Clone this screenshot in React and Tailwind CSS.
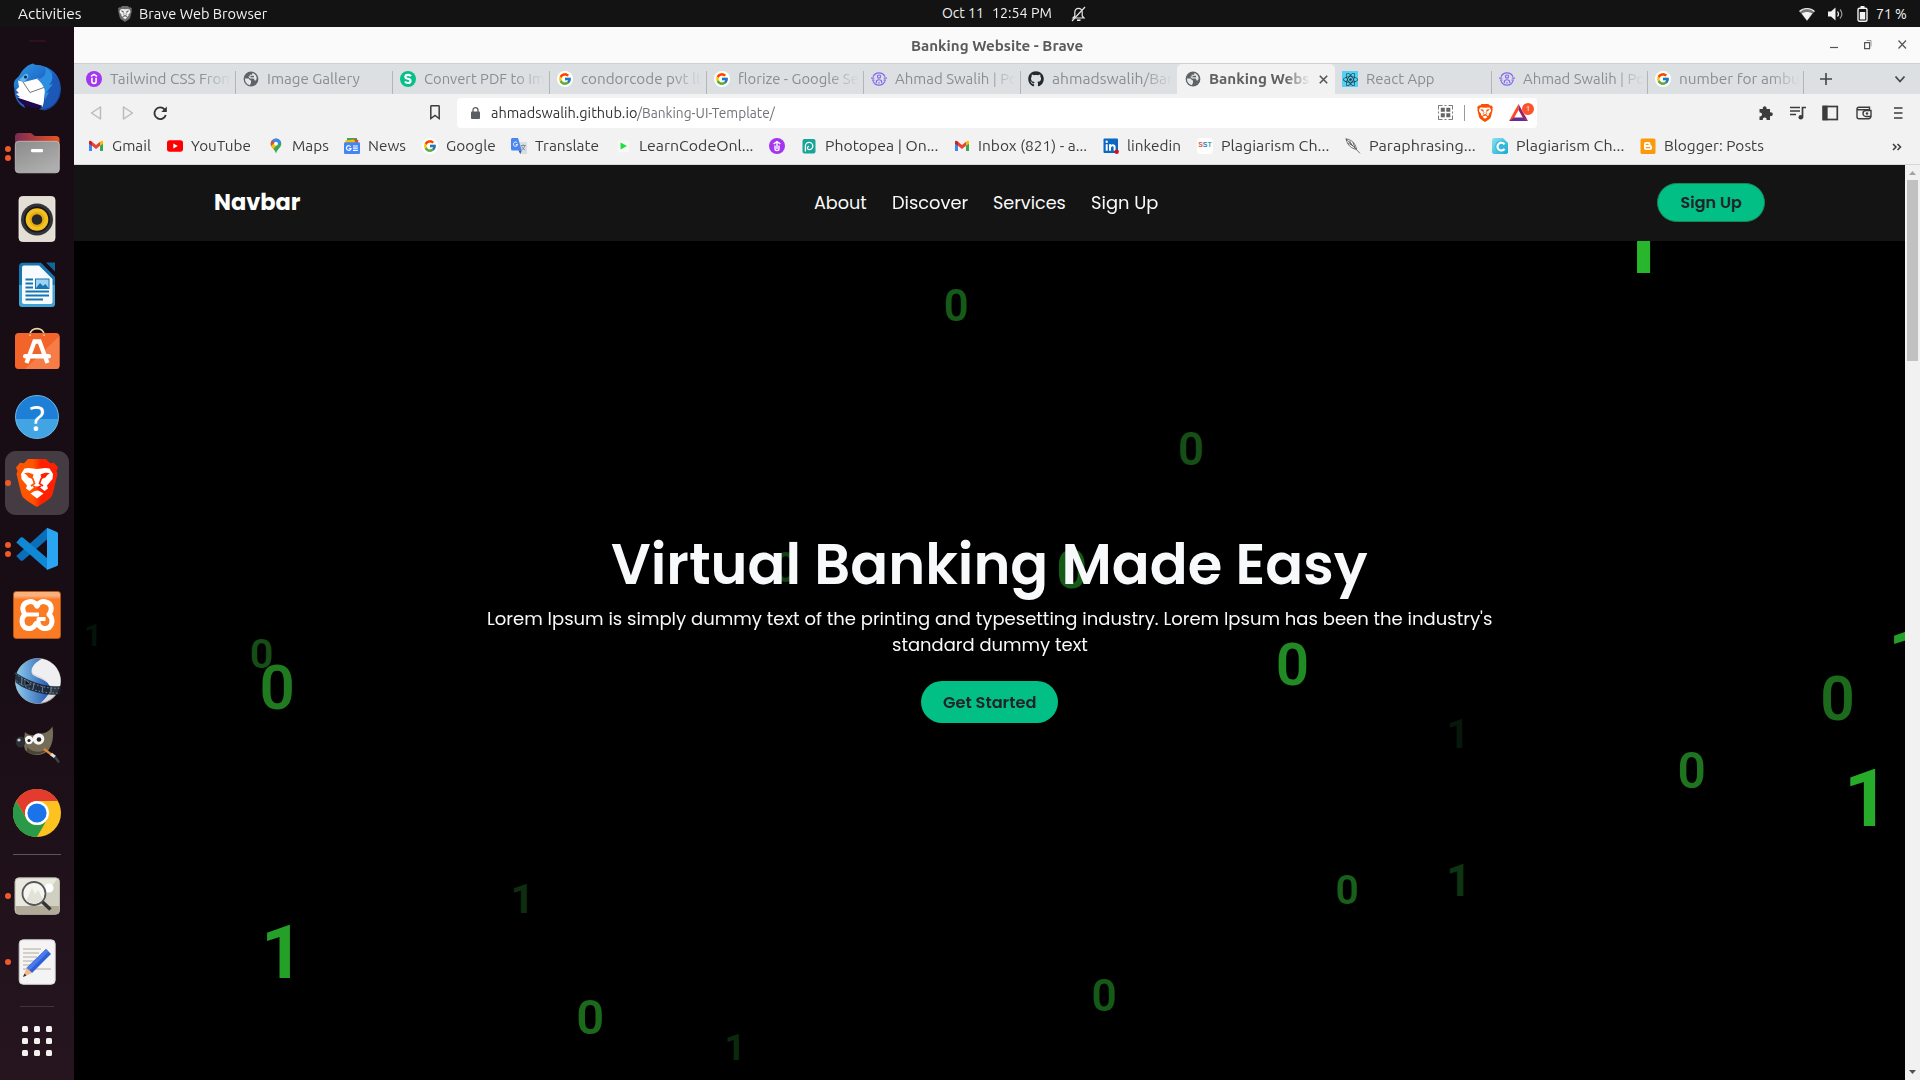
import { useLayoutEffect, useRef, useState } from "react";
import { FcGoogle } from "react-icons/fc";
import { FaGithub, FaReact } from "react-icons/fa";

/* Single line of text stretched to an exact width. */
function Fit({ w, className = "", children }) {
  const ref = useRef(null);
  const [s, setS] = useState(1);
  useLayoutEffect(() => {
    setS(w / ref.current.offsetWidth);
  }, [w]);
  return (
    <span className={"block shrink-0 whitespace-nowrap " + className} style={{ width: w }}>
      <span ref={ref} className="inline-block origin-left" style={{ transform: `scaleX(${s})` }}>
        {children}
      </span>
    </span>
  );
}

/* ---------- small site icons ---------- */
const Google = () => (
  <span className="flex size-4 items-center justify-center rounded-full bg-white">
    <FcGoogle size={14} />
  </span>
);
const Udemy = () => (
  <svg width="16" height="16" viewBox="0 0 16 16">
    <circle cx="8" cy="8" r="8" fill="#a435f0" />
    <path d="M5 5.400 8 3.400l3 2M5.900 6.800v3.600c0 2.600 4.200 2.600 4.200 0V6.800" fill="none" stroke="#fff" strokeWidth="1.600" />
  </svg>
);
const UdemyT = () => (
  <svg width="16" height="16" viewBox="0 0 16 16">
    <circle cx="8" cy="8" r="8" fill="#a435f0" />
    <path d="M4.600 6 8 3.600 11.400 6M6 7.600v3.200c0 2.400 4 2.400 4 0V7.600M8 4v7" fill="none" stroke="#fff" strokeWidth="1.400" />
  </svg>
);
const Globe = () => (
  <svg width="16" height="16" viewBox="0 0 16 16">
    <circle cx="8" cy="8" r="7.400" fill="#5f6368" />
    <path d="M2 7.600h2.500c2.500 0 1.500 1.900 3.500 1.900v2.500l-1.200 2.300C4 13.600 1.800 11 2 7.600z" fill="#e4e7ea" />
    <path d="M9.500 2.100 9 3.800H6.700v1.700H5.200L7 7.600h3c1.500 0 1.500 1.800 1.500 1.800h1.200c1.700-1.200 1.300-5.600-3.200-7.300z" fill="#e4e7ea" />
    <path d="M7.500 4.800h3.500v1.500H7.500z" fill="#5f6368" />
  </svg>
);
const Smallpdf = () => (
  <svg width="16" height="16" viewBox="0 0 16 16">
    <circle cx="8" cy="8" r="8" fill="#06c08a" />
    <path
      d="M10.900 5.300C10.300 4.300 9.300 3.900 8.100 3.900c-3.300 0-3.500 2.900-1.200 3.600l2 .5c2.400.7 2.200 4-.9 4-1.400 0-2.500-.5-3-1.500"
      fill="none"
      stroke="#fff"
      strokeWidth="2.100"
    />
  </svg>
);
const Person = () => (
  <svg width="16" height="16" viewBox="0 0 16 16" fill="none" stroke="#8468f0" strokeWidth="1.200">
    <path d="M2 5.800A6.600 6.600 0 0 1 14 5.800M2 10.200A6.600 6.600 0 0 0 14 10.200" />
    <circle cx="8" cy="5.600" r="1.600" />
    <path d="M5.300 12.300V11c0-3 5.400-3 5.400 0v1.300M0 7.200h3.200M12.800 7.200H16M1 9.200h2.500M12.500 9.200H15M8 11v1.500" />
  </svg>
);
const ReactIcon = () => (
  <span className="flex size-4 items-center justify-center bg-[#53d1f5]">
    <FaReact size={15} color="#20323a" />
  </span>
);
const Gmail = () => (
  <svg width="16" height="16" viewBox="0 0 16 16">
    <path d="M1 3.600v9.400h3V7z" fill="#4285f4" />
    <path d="M15 3.600v9.400h-3V7z" fill="#34a853" />
    <path d="M4 3.800v4L8 11l4-3.200v-4L8 6.900z" fill="#ea4335" />
    <path d="M1 5.700V4.200C1 2.400 2.800 2.400 3.700 3.400L4 3.800v4z" fill="#c5221f" />
    <path d="M15 5.700V4.200c0-1.800-1.800-1.800-2.700-.8l-.3.400v4z" fill="#fbbc04" />
  </svg>
);
const YouTube = () => (
  <svg width="16" height="16" viewBox="0 0 16 16">
    <rect y="2.300" width="16" height="11.400" rx="2.600" fill="#f00" />
    <path d="M6.300 5.400v5.200L10.800 8z" fill="#fff" />
  </svg>
);
const Maps = () => (
  <svg width="16" height="16" viewBox="0 0 16 16">
    <path d="M8 0.500a5.300 5.300 0 0 0-5.300 5.300C2.700 9.500 6.600 10.600 8 15.500c1.400-4.900 5.300-6 5.300-9.700A5.300 5.300 0 0 0 8 .5z" fill="#34a853" />
    <path d="M8 .5a5.300 5.300 0 0 0-4.100 2L6.500 4.700 11 1.400A5.300 5.300 0 0 0 8 .5z" fill="#4285f4" />
    <path d="M3.900 2.500C2.400 4.200 2.400 6.300 3.100 7.900L6.500 4.700z" fill="#ea4335" />
    <path d="M3.100 7.900c.5 1.200 1.300 2 2.200 3l4.700-5L6.500 4.700z" fill="#fbbc04" />
    <path d="M11 1.400a5.200 5.200 0 0 1 2.100 3L9.500 7 8 4z" fill="#4285f4" />
    <circle cx="8" cy="5.700" r="1.900" fill="#fff" />
  </svg>
);
const News = () => (
  <svg width="16" height="16" viewBox="0 0 16 16">
    <path d="M3 0h10v4H3z" fill="#34a853" />
    <path d="M9 1l5.500 1-1 4H8z" fill="#ea4335" />
    <path d="M1 2.500l9-1 2 4H2z" fill="#fbbc04" />
    <rect y="4.300" width="16" height="11.700" rx="1.200" fill="#4285f4" />
    <path d="M6.700 8.800A2.300 2.300 0 1 0 7 10.500H5M9 8h4.800M9 10.200h4.800M9 12.400h4.800" fill="none" stroke="#fff" strokeWidth="1.200" />
  </svg>
);
const Translate = () => (
  <svg width="16" height="16" viewBox="0 0 16 16">
    <path d="M6 4h10v12H9z" fill="#d9dce0" />
    <path d="M0 1.500C0 .7.700 0 1.500 0H7l3.800 12.500H1.500A1.500 1.500 0 0 1 0 11z" fill="#4a86f0" />
    <path d="M7.500 12.500h3.300L9.300 16z" fill="#2b59b5" />
    <path d="M6.300 5A2.100 2.100 0 1 0 6.600 6.600H4.800" fill="none" stroke="#fff" strokeWidth="1" />
    <path d="M9.800 7.500h5M12.200 6.500v1M13.700 7.500c-.3 2-1.500 3.500-3 4.500M10.800 8.500c.5 1.500 1.800 2.800 3.200 3.500" fill="none" stroke="#7b8794" strokeWidth=".9" />
  </svg>
);
const Learn = () => (
  <svg width="16" height="16" viewBox="0 0 16 16">
    <rect x="3" y="2.500" width="11" height="12" rx="2" fill="#f8f8f8" />
    <path d="M5.500 4.500v7L12 8z" fill="#1fe03c" />
  </svg>
);
const Photopea = () => (
  <svg width="16" height="16" viewBox="0 0 16 16">
    <rect x="1.500" y="1" width="13" height="14.500" rx="2" fill="#18a497" />
    <path d="M4.400 13.500V8a3.700 3.700 0 1 1 3.700 3.700c-2.300 0-2-3.400-.1-3.400" fill="none" stroke="#fff" strokeWidth="1.300" />
  </svg>
);
const LinkedIn = () => (
  <svg width="16" height="16" viewBox="0 0 16 16">
    <rect x=".5" y=".5" width="14.500" height="14.500" rx="1" fill="#0a66c2" />
    <path d="M3.700 6.300v6.400M7 12.700V6.300M7.300 9c.5-2.300 4.300-2.600 4.300.500v3.200" fill="none" stroke="#fff" strokeWidth="2" />
    <circle cx="3.700" cy="3.800" r="1.200" fill="#fff" />
    <circle cx="13.700" cy="13.700" r="2.200" fill="#d11124" />
  </svg>
);
const Sst = () => (
  <span className="flex size-4 items-center justify-center rounded bg-white font-['Liberation_Sans'] text-[7px] font-bold">
    <span className="text-[#e0554f]">S</span>
    <span className="text-[#2d7fc2]">S</span>
    <span className="text-[#4aa78f]">T</span>
  </span>
);
const Feather = () => (
  <svg width="16" height="16" viewBox="0 0 16 16" fill="none" stroke="#444" strokeWidth=".75">
    <path d="M1 .8c4 .7 7 2.500 8.700 5.500 1 1.800 1.600 3.600 1.900 5C8 11 4.700 8.800 3 6 2 4.300 1.300 2.500 1 .8z" fill="#fff" />
    <path d="m1 .8 14 14.500M4.500 2.800 7 7M8 4.500l2 5.500M3 5l5 3" />
  </svg>
);
const CIcon = () => (
  <svg width="16" height="16" viewBox="0 0 16 16">
    <defs>
      <linearGradient id="cg" x1="0" x2="1" y2="1">
        <stop offset="0" stopColor="#8fe3f0" />
        <stop offset="1" stopColor="#12a9cf" />
      </linearGradient>
    </defs>
    <path d="M1.500 0H11l5 5v9.500L14.500 16h-13L0 14.500v-13z" fill="url(#cg)" />
    <circle cx="9.200" cy="8.500" r="6" fill="#35b9d8" />
    <path d="M12.500 6.300a3.900 3.900 0 1 0 0 4.600" fill="none" stroke="#fff" strokeWidth="2.200" />
  </svg>
);
const Blogger = () => (
  <svg width="16" height="16" viewBox="0 0 16 16">
    <rect x=".5" y=".5" width="15" height="15.500" rx="1.500" fill="#fb9b0b" />
    <path d="M4 6a2 2 0 0 1 2-2h2.500a2 2 0 0 1 2 2v1c0 .5 1.500.4 1.500 1.200V10a2 2 0 0 1-2 2H6a2 2 0 0 1-2-2z" fill="#fff" />
    <path d="M6.200 6.300h2M6.200 9.700h3.600" stroke="#fb9b0b" strokeWidth="1.200" strokeLinecap="round" />
  </svg>
);

/* ---------- Brave lion, shared by dock, top bar and address bar ---------- */
function Lion({ w, h, fill, face = "#fff" }) {
  return (
    <svg width={w} height={h} viewBox="0 0 42 48" className="shrink-0">
      <defs>
        <linearGradient id="br" x1="0" x2="1">
          <stop offset=".4" stopColor="#ff5500" />
          <stop offset=".6" stopColor="#ff2000" />
        </linearGradient>
      </defs>
      <path
        d="M12 0h18l4 4.300 4-.5L42 8.500l-1.500 3.500 1 3-5 20.500C35 40 29 43 21 48 13 43 7 40 5.500 35.500L.5 15l1-3L0 8.500l4-4.700 4 .5z"
        fill={fill}
      />
      <path
        d="M12.500 9 21 10l8.500-1 4 .5L37 15l-.5 5-5.500 6.500 1 3-3.500 2.500-5-4-2.500-.500-2.500.5-5 4L10 29.500l1-3L5.500 20 5 15l3.500-5.500z"
        fill={face}
      />
      <path d="M8 14.300c3-1.200 6-.6 9.500 1.200L16.500 20l-4-1.500c-1-1.800-2.500-3.200-4.500-4.200zM34 14.300c-3-1.200-6-.6-9.500 1.200l1 4.500 4-1.500c1-1.800 2.500-3.200 4.500-4.200z" fill={fill} />
      <path d="M16.500 19 18.500 24.500 15 27M25.500 19 23.500 24.500 27 27M17 27l4 2 4-2" fill="none" stroke={fill} strokeWidth="1.700" />
      <path d="M14.500 34.500c2-1.500 4.500-3 6.500-3s4.500 1.500 6.500 3L21 39.500z" fill={face} />
    </svg>
  );
}

/* ---------- dock icons ---------- */
const Ic = ({ children }) => (
  <svg width="48" height="48" viewBox="0 0 48 48">
    {children}
  </svg>
);
const Thunderbird = () => (
  <Ic>
    <defs>
      <linearGradient id="tb" x1="0" y1="0" x2=".8" y2="1">
        <stop offset="0" stopColor="#2f9be6" />
        <stop offset=".6" stopColor="#1c5fc4" />
        <stop offset="1" stopColor="#15357f" />
      </linearGradient>
    </defs>
    <path d="M6 13C10 6 14 2 20 .5l2 1.200C37 2 48 12 48 26c0 10-6 19-16 21.500l-6-1 3-3L7 35C2 30-1 22 2 17z" fill="url(#tb)" />
    <path d="M2 24c-2 8 2 17 10 21l-3-9z" fill="#2765bd" />
    <path d="M5 17.500 11 19l14-3.500 8 8.500-3 20L4 35l3-1-4-3 3-1-3-3 3-3z" fill="#fff" />
    <path d="m10 19 7 10.500L35 23" fill="none" stroke="#777" strokeWidth="1" />
    <path d="m4 34.500 26 8.500-5 1.500-2 1C14 45 6 40 4 34.500z" fill="#21074b" />
    <path d="M33 23c-3 8 1 15-5 23.500C44 45 47 33 47 24c-1-7-4-12-8-14 2 6-1 10-6 13z" fill="#1b58b8" />
    <path d="M24 16c8 0 10-7 8-12 8 4 10 12 4 18l4-1-7 9 3-1-4 8c1-8 0-15-8-21z" fill="#2c8ee0" />
    <path d="m6 17 6-6c3-1 4 2 3 4l-4 4z" fill="#5fb7ef" />
    <circle cx="12.500" cy="14" r="1.600" fill="#222c33" />
  </Ic>
);
const Files = () => (
  <Ic>
    <defs>
      <linearGradient id="fl" x1="0" x2="1">
        <stop offset="0" stopColor="#7b2a55" />
        <stop offset="1" stopColor="#e95420" />
      </linearGradient>
      <linearGradient id="fg" x1="0" x2=".6" y2="1">
        <stop offset="0" stopColor="#8b8b8b" />
        <stop offset="1" stopColor="#aeaeae" />
      </linearGradient>
    </defs>
    <path d="M2 30V7.500A3.500 3.500 0 0 1 5.500 4h12.300l4 3H43a3.500 3.500 0 0 1 3.500 3.500V30z" fill="url(#fl)" />
    <rect x="2.300" y="12.300" width="44" height="31.500" rx="3.500" fill="url(#fg)" stroke="#c4c4c4" strokeWidth=".8" />
    <rect x="18" y="20" width="12" height="3.300" rx="1.200" fill="#fff" />
  </Ic>
);
const Rhythmbox = () => (
  <Ic>
    <rect x="6" y="1.500" width="36" height="45" rx="3.500" fill="#e3dfd4" stroke="#f5f2ea" strokeWidth=".8" />
    <circle cx="24" cy="24.500" r="16" fill="#33333a" />
    <circle cx="24" cy="24.500" r="13" fill="#17171b" />
    <circle cx="24" cy="24.500" r="11.300" fill="#f2c021" />
    <circle cx="24" cy="24.500" r="7.500" fill="#e3ab12" />
    <circle cx="24" cy="24.500" r="5.300" fill="#28282b" />
  </Ic>
);
const Writer = () => (
  <Ic>
    <path d="M10 1.800h18L42 16v26.500a3.500 3.500 0 0 1-3.500 3.500h-29A3.500 3.500 0 0 1 6 42.500V5.800a4 4 0 0 1 4-4z" fill="#1677b0" />
    <path d="M6 24h36v18.500a3.500 3.500 0 0 1-3.500 3.500h-29A3.500 3.500 0 0 1 6 42.500z" fill="#3fa3d6" />
    <path d="M33 1.500h9v9z" fill="#11669a" />
    <path d="M11 4.500h15L39.500 18v23a2 2 0 0 1-2 2H11a2 2 0 0 1-2-2V6.500a2 2 0 0 1 2-2z" fill="#f7fbfd" />
    <path d="M12.500 18.500H20M12.500 22.500H20M12.500 26.500H20M12.500 30.500h23.500M12.500 34.500h23.500M12.500 38.500H30" stroke="#1677b0" strokeWidth="1.900" />
    <rect x="22.500" y="18" width="13.500" height="9.500" fill="#9ed3f2" stroke="#1677b0" />
    <path d="m23 27 4-5 3 3 2.500-2 3 4z" fill="#1677b0" />
  </Ic>
);
const Software = () => (
  <Ic>
    <path d="M17 8c0-8.500 14-8.500 14 0" fill="none" stroke="#efd9a2" strokeWidth="1.600" />
    <rect x="2" y="6" width="44.500" height="36" rx="3.500" fill="#f2642a" />
    <path d="M46.500 9v29.500a3.500 3.500 0 0 1-3.500 3.500H12z" fill="#f67c48" />
    <path d="M17 9V7.500M31 9V7.500" stroke="#efd9a2" strokeWidth="1.600" />
    <path d="m13.500 36 8-21.500h5L34.500 36" fill="none" stroke="#fff" strokeWidth="4.300" />
    <rect x="10" y="27" width="28" height="4.600" rx="2.300" fill="#fff" />
  </Ic>
);
const Help = () => (
  <div className="flex size-11 items-center justify-center rounded-full border border-[#6db9ec] bg-linear-to-b from-[#1d7fd6] from-55% to-[#43a4e4] to-55% font-['Noto_Sans'] text-[35px] leading-none text-white">
    ?
  </div>
);
const BraveBig = () => <Lion w={42} h={48} fill="url(#br)" />;
const VsCode = () => (
  <Ic>
    <path d="m3.300 31 4 4.200c.9.900 1.700.7 2.600.2L34 14.500V3z" fill="#0a6fb8" />
    <path d="m3.300 17.500 4-4.700c.9-.9 1.700-.7 2.600-.2L34 33v11.500z" fill="#1088d4" />
    <path d="M34 2.800 44 7c.7.500 1 1 1 2v30c0 1-.3 1.600-1 2l-10 4z" fill="#2aa5f2" />
  </Ic>
);
const Xampp = () => (
  <div className="flex size-12 items-center justify-center rounded-[3px] border border-[#b05512] bg-linear-to-b from-[#f9b07a] from-8% to-[#fb7a24] to-16%">
    <svg width="42" height="34" viewBox="0 0 42 34" fill="none" stroke="#fff" strokeWidth="5" strokeLinejoin="round" strokeLinecap="round">
      <path d="M21 8C19.500 4 15.500 3 12 4 6 5.500 5.500 12 9 16.500 5 20 5 26 9 29.500c4.500 2.500 9 .5 11-4" />
      <path d="M21 8c1.500-4 5.500-5 9-4 6 1.500 6.500 8 3 12.500 4 3.500 4 9.500 0 13-4.500 2.500-9 .5-11-4" />
      <path d="M10 16.500h13" strokeWidth="4" strokeLinecap="butt" />
      <path d="M20.500 26h2V21h7" strokeWidth="4" strokeLinecap="butt" />
    </svg>
  </div>
);
const OpenShot = () => (
  <Ic>
    <defs>
      <linearGradient id="os" x1="0" x2="1">
        <stop offset="0" stopColor="#8fd0f0" />
        <stop offset="1" stopColor="#2355ae" />
      </linearGradient>
      <clipPath id="ball">
        <circle cx="25" cy="24" r="22.500" />
      </clipPath>
    </defs>
    <circle cx="25" cy="24" r="22.500" fill="#dcdcde" stroke="#999" />
    <g clipPath="url(#ball)">
      <path d="M32 1C20 5 16 14 20 18c4 3 15 5 17 12 1 6-5 13-12 18H2V0z" fill="url(#os)" />
      <path d="M30 1c-9 5-14 12-9 16 5 3 13 4 15 11l12 2V0z" fill="#efeff1" />
    </g>
    <path d="M1 14c9 8 31 17 47 15l-1 8.500C31 39.500 9 32 2.500 25z" fill="#17202c" opacity=".88" />
    <path d="M2.500 16.500c9 8 30 16.500 44.500 14.500M3.500 24c9 8 28 13 43 12" fill="none" stroke="#7d8b9c" strokeWidth="1" strokeDasharray="1.500 2" />
    <path d="M12 22.500l6 5-6 .8z" fill="#0b1118" stroke="#8fb7da" strokeWidth=".5" />
    <path d="m9 21-.5 7M21 26l-1 6M30 29l-1 6M38 30v6" stroke="#8a98a8" strokeWidth=".8" />
  </Ic>
);
const Gimp = () => (
  <Ic>
    <path d="M12 9c4 4 9 4 14 2 6-1 10-2 13.500-7.500 1.500 10 0 18-4 23.500-6 7-17 6-22.500 1-3-3-2-12-1-19z" fill="#756c58" />
    <path d="M14 24c6 6 15 6 20 2-4 6-14 7-20 3z" fill="#4a4434" />
    <circle cx="16" cy="17" r="4.200" fill="#f5f5f5" />
    <circle cx="25.500" cy="16" r="5.800" fill="#f5f5f5" />
    <circle cx="16" cy="17.500" r="1.600" fill="#222" />
    <circle cx="26" cy="16.500" r="2.300" fill="#222" />
    <ellipse cx="7.500" cy="19" rx="4.800" ry="5.500" fill="#2a2f35" />
    <circle cx="6" cy="17" r="1.600" fill="#ccc" />
    <path d="m31 26 8 6" stroke="#e08a35" strokeWidth="2.200" />
    <path d="m38 31 4 3" stroke="#ddd" strokeWidth="3" />
    <path d="m42 34 4 5.500" stroke="#3c444a" strokeWidth="2.400" />
  </Ic>
);
const Chrome = () => (
  <Ic>
    <circle cx="24" cy="24" r="24" fill="#fcc21f" />
    <path d="M3.200 12A24 24 0 0 1 44.800 12H24a12 12 0 0 0-10.400 18z" fill="#e33b2e" />
    <path d="M3.200 12A24 24 0 0 0 24 48l10.400-18a12 12 0 0 1-20.800 0z" fill="#2a9a48" />
    <circle cx="24" cy="24" r="12" fill="#fff" />
    <circle cx="24" cy="24" r="9.600" fill="#1a73e8" />
  </Ic>
);
const Viewer = () => (
  <Ic>
    <rect x="2" y="5.800" width="44.500" height="36.500" rx="4" fill="#e9e9e0" stroke="#b7b3a5" />
    <path d="M25 34.500 44 7l2 2v26z" fill="#cfcfc2" />
    <path d="M2.500 34h43.500v4.500a3.500 3.500 0 0 1-3.500 3.500h-36.500a3.500 3.500 0 0 1-3.500-3.500z" fill="#b1aa98" />
    <circle cx="36" cy="16" r="4.600" fill="#fff" />
    <circle cx="21" cy="21.500" r="11.500" fill="#f6f6f1" stroke="#58585a" strokeWidth="1.800" />
    <path d="m13 29 6-13 3 6 3-4 5 9-7 5z" fill="#e2e2d8" />
    <path d="m29.500 30 8 7.500" stroke="#333" strokeWidth="3.500" />
  </Ic>
);
const Editor = () => (
  <Ic>
    <rect x="6.200" y="1.800" width="36" height="44.500" rx="4" fill="#f4f4f4" stroke="#d0d0d0" />
    <path d="M10 11h18M10 15h16M10 19h14M10 23h12M10 27h10M10 31h28" stroke="#c9c4b8" strokeWidth="1.500" />
    <path d="m33 11 5 5-19 19-5.500-5z" fill="#2f5fd6" />
    <path d="m33 11 2.500 2.500-19 19-3-2.500z" fill="#4b7bea" />
    <path d="m13.500 30 5.500 5-9 4z" fill="#f0b987" />
    <path d="m11.500 35.500 2 2-3.500 1.500z" fill="#333" />
  </Ic>
);

const dock = [
  { I: Thunderbird, dots: 0 },
  { I: Files, dots: 2 },
  { I: Rhythmbox, dots: 0 },
  { I: Writer, dots: 0 },
  { I: Software, dots: 0 },
  { I: Help, dots: 0 },
  { I: BraveBig, dots: 1, active: true },
  { I: VsCode, dots: 2 },
  { I: Xampp, dots: 0 },
  { I: OpenShot, dots: 0 },
  { I: Gimp, dots: 0 },
  { I: Chrome, dots: 0 },
];
const running = [
  { I: Viewer, dots: 1 },
  { I: Editor, dots: 1 },
];

function DockItem({ I, dots, active }) {
  return (
    <div className="relative flex h-[66px] w-full items-center justify-center">
      <div className={"flex size-16 items-center justify-center rounded-[11px] " + (active ? "bg-[#453c43]" : "")}>
        <I />
      </div>
      <div className="absolute left-[5px] top-0 flex h-full flex-col justify-center gap-[3px]">
        {Array.from({ length: dots }, (_, i) => (
          <span key={i} className="size-[6px] rounded-full bg-[#f05a28]" />
        ))}
      </div>
    </div>
  );
}

const tabs = [
  { I: Udemy, t: "Tailwind CSS From", w: 125, c: "w-[157px]", fade: true },
  { I: Globe, t: "Image Gallery", w: 93, c: "w-[157px]" },
  { I: Smallpdf, t: "Convert PDF to Im", w: 121, c: "w-[157px]", fade: true },
  { I: Google, t: "condorcode pvt lt", w: 121, c: "w-[157px]", fade: true },
  { I: Google, t: "florize - Google Se", w: 121, c: "w-[157px]", fade: true },
  { I: Person, t: "Ahmad Swalih | Po", w: 123, c: "w-[157px]", fade: true },
  { I: () => <FaGithub size={16} color="#24292f" />, t: "ahmadswalih/Ban", w: 124, c: "w-[156px]", fade: true, last: true },
  { I: Globe, t: "Banking Websi", w: 105, c: "w-[158px]", fade: true, active: true },
  { I: ReactIcon, t: "React App", w: 69, c: "w-[157px]" },
  { I: Person, t: "Ahmad Swalih | Po", w: 122, c: "w-[156px]", fade: true },
  { I: Google, t: "number for ambu", w: 121, c: "w-[156px]", fade: true },
];

const marks = [
  { I: Gmail, t: "Gmail", w: 39, c: "w-[79px]" },
  { I: YouTube, t: "YouTube", w: 60, c: "w-[101px]" },
  { I: Maps, t: "Maps", w: 37, c: "w-[76px]" },
  { I: News, t: "News", w: 38, c: "w-[78px]" },
  { I: Google, t: "Google", w: 50, c: "w-[89px]" },
  { I: Translate, t: "Translate", w: 64, c: "w-[104px]" },
  { I: Learn, t: "LearnCodeOnl...", w: 115, c: "w-[154px]" },
  { I: UdemyT, t: "", w: 0, c: "w-[32px]" },
  { I: Photopea, t: "Photopea | On...", w: 113, c: "w-[153px]" },
  { I: Gmail, t: "Inbox (821) - a...", w: 109, c: "w-[149px]" },
  { I: LinkedIn, t: "linkedin", w: 54, c: "w-[94px]" },
  { I: Sst, t: "Plagiarism Ch...", w: 108, c: "w-[148px]" },
  { I: Feather, t: "Paraphrasing...", w: 107, c: "w-[147px]" },
  { I: CIcon, t: "Plagiarism Ch...", w: 108, c: "w-[148px]" },
  { I: Blogger, t: "Blogger: Posts", w: 100, c: "w-[138px]" },
];

/* Falling binary rain: digit, left edge, right edge, baseline, glyph height, colour. */
const rain = [
  ["1", 86, 97, 646, 22, "#04140a"],
  ["0", 251, 272, 668.5, 30.5, "#174d17"],
  ["0", 262, 292, 710, 45.5, "#1f7a20"],
  ["1", 513.5, 527, 913.5, 29.5, "#0d2f10"],
  ["1", 266.5, 290, 978.5, 52.5, "#249f27"],
  ["0", 578.5, 602, 1034.5, 36, "#1b691b"],
  ["1", 727.5, 738.5, 1060, 26, "#0a2a0d"],
  ["0", 946, 966, 321.5, 32, "#165a17"],
  ["0", 1180, 1202, 465.5, 33.5, "#154f16"],
  ["0", 1058.5, 1085, 589, 40, "#165a17"],
  ["0", 775, 796, 582, 31.5, "#123f14"],
  ["0", 1278.7, 1306, 685, 43, "#228a24"],
  ["1", 1449.5, 1462, 747.5, 28.5, "#08170b"],
  ["0", 1822.5, 1852.5, 721, 44.5, "#1c6b1d"],
  ["0", 1679, 1704, 788.5, 36.5, "#1f751f"],
  ["1", 1850, 1875, 826, 57, "#26ac2a"],
  ["1", 1893.5, 1917, 681, 53, "#249f27"],
  ["0", 1337, 1357, 904, 30, "#185f19"],
  ["1", 1449, 1464, 896, 31, "#0e3511"],
  ["0", 1093, 1115, 1010.5, 32.5, "#165a17"],
  ["1", 1621, 1650, 273.5, 66, "#28b62c"],
];

function Digit({ d }) {
  const [ch, l, r, b, h, color] = d;
  const fs = ch === "0" ? h / 0.735 : h / 0.711;
  const base = ch === "0" ? b - fs * 0.012 : b;
  const mid = ch === "0" ? 0.284 : 0.233;
  return (
    <span
      className={"absolute font-['Roboto'] leading-none " + (ch === "1" ? "font-bold" : "font-semibold")}
      style={{ left: (l + r) / 2 - mid * fs - 74, top: base - 0.8415 * fs - 240.2, fontSize: fs, color }}
    >
      {ch}
    </span>
  );
}

export default function App() {
  return (
    <div className="flex h-[1080px] w-[1920px] flex-col overflow-hidden bg-black font-['Ubuntu','Noto_Sans',sans-serif]">
      {/* system bar */}
      <header className="flex h-[27px] shrink-0 items-center bg-[#131313] pl-[18px] text-[14px] text-[#f2f2f2]">
        <div className="w-[100px] pt-px">
          <Fit w={63}>Activities</Fit>
        </div>
        <div className="w-[21px]">
          <Lion w={14} h={16} fill="#6d6d6d" face="#f0f0f0" />
        </div>
        <div className="w-[803px] pt-px">
          <Fit w={128}>Brave Web Browser</Fit>
        </div>
        <div className="flex w-[129px] gap-[8px]">
          <Fit w={42}>Oct 11</Fit>
          <Fit w={60}>12:54 PM</Fit>
        </div>
        <svg className="mr-[713px] shrink-0" width="15" height="16" viewBox="0 0 15 16" fill="none" stroke="#e8e8e8" strokeWidth="1.200">
          <path d="M2 12h11l-1.800-2V6.500C11.200 4 9.600 2.300 7.500 2.300S3.800 4 3.800 6.500V10z" />
          <path d="m1 15 13-14" />
          <path d="M6 14.200h3.500" strokeWidth="1.600" />
        </svg>
        <svg className="mr-[13px] shrink-0" width="16" height="14" viewBox="0 0 16 14">
          <path d="M8 14 .5 4.500C4.500.500 11.500.500 15.500 4.500z" fill="#777" />
          <path d="M.5 4.500C4.500.500 11.500.500 15.500 4.500" fill="none" stroke="#f2f2f2" strokeWidth="1.200" />
          <path d="M8 13.500 2.800 6.500c3-2 7.400-2 10.400 0z" fill="#f2f2f2" />
        </svg>
        <svg className="mr-[13px] shrink-0" width="16" height="14" viewBox="0 0 16 14">
          <path d="M0 4.500h3L7.500.500v13L3 9.500H0z" fill="#f2f2f2" />
          <path d="M9.500 4.500c1.200 1.500 1.200 3.500 0 5" fill="none" stroke="#f2f2f2" strokeWidth="1.200" />
          <path d="M12 2.500c2.300 2.700 2.300 6.300 0 9" fill="none" stroke="#999" strokeWidth="1.200" />
        </svg>
        <svg className="mr-[8px] shrink-0" width="11" height="16" viewBox="0 0 11 16">
          <rect x="1" y="2.200" width="9" height="13" rx="1.500" fill="none" stroke="#f2f2f2" strokeWidth="1.400" />
          <path d="M3.500 0h4v2h-4zM2.800 6h5.400v7.500H2.800z" fill="#f2f2f2" />
        </svg>
        <Fit w={31} className="pt-px">71 %</Fit>
      </header>

      <div className="flex min-h-0 flex-1">
        {/* dock */}
        <aside className="flex w-[74px] shrink-0 flex-col items-center bg-linear-to-b from-[#190d15] from-60% to-[#26151f]">
          <div className="mt-[13px] h-[2px] w-[17px] rounded bg-[#330d22]" />
          <div className="mt-[12px] flex w-full flex-col">
            {dock.map((d, i) => (
              <DockItem key={i} {...d} />
            ))}
          </div>
          <div className="mt-[8px] h-px w-12 bg-[#5e5459]" />
          <div className="mt-[8px] flex w-full flex-col">
            {running.map((d, i) => (
              <DockItem key={i} {...d} />
            ))}
          </div>
          <div className="mt-[11px] h-px w-[34px] shrink-0 bg-[#40333b]" />
          <div className="mt-[19px] grid grid-cols-3 gap-[6px]">
            {Array.from({ length: 9 }, (_, i) => (
              <span key={i} className="size-[6px] rounded-[1.500px] bg-[#f4f2f0]" />
            ))}
          </div>
        </aside>

        <main className="flex min-w-0 flex-1 flex-col">
          {/* title bar */}
          <div className="flex h-[37px] shrink-0 items-center border-b border-[#cfcfcf] bg-[#fafafa] pl-[837px]">
            <Fit w={172} className="mr-[746px] pt-[2px] text-[14px] font-bold text-[#5b5b5b]">
              Banking Website - Brave
            </Fit>
            <svg width="80" height="12" viewBox="0 0 80 12" fill="none" stroke="#555" strokeWidth="1.200">
              <path d="M1 8.500h8" />
              <path d="M35.600 3.600h5v6h-5z" />
              <path d="M37.500 1.500h4.500v6" stroke="#999" strokeWidth="1" />
              <path d="m69.500 1.500 7.500 8M77 1.500l-7.500 8" />
            </svg>
          </div>

          {/* tabs */}
          <div className="flex h-[30px] shrink-0 bg-[#dce0e3] pl-[5px] text-[14.500px]">
            {tabs.map(({ I, t, w, c, fade, active, last }, i) => (
              <div
                key={i}
                className={
                  "flex shrink-0 items-center " +
                  c +
                  (active ? " rounded-t-[5px] bg-[#f2f2f2] pl-[8px] font-bold text-[#5f6164]" : " pl-[7px] text-[#8b8d90]")
                }
              >
                <span className="mr-2 shrink-0">
                  <I />
                </span>
                <div className={"shrink-0 " + (active ? "w-[101px] " : "w-[121px] ") + (fade ? "[mask-image:linear-gradient(to_right,#000_75%,transparent)]" : "")}>
                  <Fit w={w} className="leading-[20px]">
                    {t}
                  </Fit>
                </div>
                {active ? (
                  <svg className="ml-[9px] shrink-0" width="9" height="9" viewBox="0 0 9 9" stroke="#555" strokeWidth="1.600">
                    <path d="m.8.800 7.400 7.400M8.200.8.800 8.200" />
                  </svg>
                ) : (
                  !last && <span className="ml-auto mt-[7px] h-[23px] w-px shrink-0 bg-[#b3b6b9]" />
                )}
              </div>
            ))}
            <svg className="ml-[16px] mt-[9px] shrink-0" width="12" height="12" viewBox="0 0 12 12" stroke="#444" strokeWidth="1.600">
              <path d="M6 0v12M0 6h12" />
            </svg>
            <svg className="ml-[62px] mt-[11px] shrink-0" width="12" height="9" viewBox="0 0 12 9" fill="none" stroke="#444" strokeWidth="1.700">
              <path d="m1.500 1.500 4.500 5 4.500-5" />
            </svg>
          </div>

          {/* toolbar */}
          <div className="flex h-[37px] shrink-0 items-center bg-[#f2f2f2] pl-[16px]">
            <svg width="80" height="16" viewBox="0 0 80 16" fill="none" strokeWidth="1.400" strokeLinejoin="round">
              <path d="M10.500 2v12L1.500 8z" stroke="#b9b9b9" />
              <path d="M33.500 2v12l9-6z" stroke="#b9b9b9" />
              <path d="M74.500 4.300A5.800 5.800 0 1 0 75.800 10" stroke="#333" strokeWidth="1.800" />
              <path d="M76.800 1.500v5.500h-5.500z" fill="#333" stroke="none" />
            </svg>
            <svg className="ml-[260px]" width="10" height="15" viewBox="0 0 10 15" fill="none" stroke="#3c3c3c" strokeWidth="1.500">
              <path d="M.8 1.500C.8 1 1.200.8 1.500.8h7c.4 0 .7.300.7.700v12L5 10.500.800 13.500z" />
            </svg>
            <div className="ml-[17px] flex h-[30px] w-[1080px] items-center rounded-[4px] bg-white pl-[14px] text-[14px]">
              <svg className="mr-[11px]" width="9" height="12" viewBox="0 0 9 12">
                <rect y="4.500" width="9" height="7.500" rx="1" fill="#5a5d61" />
                <path d="M2 5V3.200C2-.2 7-.2 7 3.200V5" fill="none" stroke="#5a5d61" strokeWidth="1.300" />
              </svg>
              <Fit w={146} className="pt-px text-[#303236]">ahmadswalih.github.io</Fit>
              <Fit w={138} className="pt-px text-[#707378]">/Banking-UI-Template/</Fit>
              <svg className="ml-[663px]" width="15" height="15" viewBox="0 0 15 15" fill="none" stroke="#555">
                <path d="M4.500.500h-4v4M10.500.500h4v4M4.500 14.500h-4v-4M10.500 14.500h4v-4M6.500.5h2M6.500 14.500h2M.5 6.500v2M14.500 6.500v2" strokeWidth=".8" />
                <path d="M2.800 2.800h4v4h-4zM8.300 2.800h4v4h-4zM2.800 8.300h4v4h-4zM8.300 8.300h4v4h-4z" fill="#666" stroke="none" />
              </svg>
              <span className="ml-[11px] mr-[12px] h-4 w-px bg-[#9a9a9a]" />
              <Lion w={16} h={18} fill="#fb5000" />
              <div className="relative ml-[16px]">
                <svg width="19" height="17" viewBox="0 0 19 17">
                  <path d="M9.500 0 0 17l5-3L9.500 6z" fill="#ff4724" />
                  <path d="M9.500 0 19 17l-5-3-4.500-8z" fill="#9e1f63" />
                  <path d="M0 17h19l-5-3.500H5z" fill="#662d91" />
                </svg>
                <span className="absolute -top-[1px] left-[13px] flex size-[12px] items-center justify-center rounded-full bg-[#fb542b] text-[8px] leading-none text-white">
                  1
                </span>
              </div>
            </div>
            <svg className="ml-[221px]" width="150" height="18" viewBox="0 0 150 18" fill="none" stroke="#3c3c3c" strokeWidth="1.700">
              <path
                d="M1.500 5h3.300c-.6-3.700 4.400-3.700 3.800 0H12v3.300c3.800-.6 3.800 4.400 0 3.800V16H8.600c.5-3.200-4.300-3.200-3.800 0H1.500v-3.600c3.300.5 3.300-4.300 0-3.800z"
                fill="#3c3c3c"
                stroke="none"
              />
              <path d="M32 3.500h10M32 7h10M32 10.500h6M44.500 13.500V3.500H48" />
              <circle cx="42.800" cy="13.300" r="2.300" fill="#3c3c3c" stroke="none" />
              <rect x="65.300" y="2.500" width="14" height="13" />
              <path d="M65.300 2.500h3.500v13h-3.500z" fill="#3c3c3c" />
              <path d="M111.500 6V3.300H101a2 2 0 0 0-2 2v7.500a2 2 0 0 0 2 2H110.500a2 2 0 0 0 2-2M99 5.800h12" strokeWidth="1.400" />
              <path d="M113 6.500h-5a2.500 2.500 0 0 0 0 6h5z" strokeWidth="1.400" />
              <circle cx="109" cy="9.500" r="1.200" fill="#3c3c3c" stroke="none" />
              <path d="M136 4h8.500M136 9h8.500M136 14h8.500" />
            </svg>
          </div>

          {/* bookmarks */}
          <div className="flex h-[34px] shrink-0 items-center border-b border-[#d3d8db] bg-[#f2f2f2] pb-[4px] pl-[14px] text-[14.500px] text-[#3a3c3f]">
            {marks.map(({ I, t, w, c }, i) => (
              <div key={i} className={"flex shrink-0 items-center gap-2 " + c}>
                <span className="shrink-0">
                  <I />
                </span>
                {t && <Fit w={w}>{t}</Fit>}
              </div>
            ))}
            <svg className="ml-[114px] mt-[3px] shrink-0" width="10" height="8" viewBox="0 0 10 8" fill="none" stroke="#3c3c3c" strokeWidth="1.500">
              <path d="m1 1 3 3-3 3M5.500 1l3 3-3 3" />
            </svg>
          </div>

          {/* page */}
          <div className="flex min-h-0 flex-1 font-['Poppins','Inter',sans-serif]">
            <div className="flex min-w-0 flex-1 flex-col bg-black">
              <nav className="flex h-[76px] shrink-0 items-center bg-[#141414] pl-[140px] text-[17.600px] text-[#f8f9fa]">
                <div className="w-[600px]">
                  <Fit w={86} className="text-[22.500px] font-bold text-white">Navbar</Fit>
                </div>
                <Fit w={53} className="mr-[25px]">About</Fit>
                <Fit w={76} className="mr-[25px]">Discover</Fit>
                <Fit w={73} className="mr-[25px]">Services</Fit>
                <Fit w={67} className="mr-[499px]">Sign Up</Fit>
                <div className="mb-px flex h-[39px] w-[108px] items-center justify-center rounded-full border border-[#198754] bg-[#02bf86] text-[16px] font-semibold text-[#212529]">
                  <Fit w={61}>Sign Up</Fit>
                </div>
              </nav>
              <section className="relative flex flex-1 flex-col items-center overflow-hidden pt-[290px] text-[#f8f9fa]">
                {rain.map((d, i) => (
                  <Digit key={i} d={d} />
                ))}
                <Fit w={757} className="relative text-[56px] font-semibold leading-[67px]">
                  Virtual Banking Made Easy
                </Fit>
                <Fit w={1005} className="relative mt-[8px] text-[17.600px] leading-[26px]">
                  Lorem Ipsum is simply dummy text of the printing and typesetting industry. Lorem Ipsum has been the industry's
                </Fit>
                <Fit w={196} className="relative text-[17.600px] leading-[26px]">standard dummy text</Fit>
                <div className="relative mt-[23px] flex h-[42px] w-[137px] items-center justify-center rounded-full bg-[#02bf86] pr-px pt-px text-[16px] font-semibold text-[#212529]">
                  <Fit w={93}>Get Started</Fit>
                </div>
              </section>
            </div>
            {/* scrollbar */}
            <div className="flex w-[15px] shrink-0 flex-col items-center bg-[#f1f1f1]">
              <svg className="mt-[6px] shrink-0" width="7" height="4" viewBox="0 0 7 4">
                <path d="M3.500 0 7 4H0z" fill="#a3a3a3" />
              </svg>
              <div className="mt-[5px] h-[181px] w-[11px] bg-[#c1c1c1]" />
              <svg className="mb-[6px] mt-auto shrink-0" width="7" height="4" viewBox="0 0 7 4">
                <path d="M0 0h7L3.500 4z" fill="#505050" />
              </svg>
            </div>
          </div>
        </main>
      </div>
    </div>
  );
}
